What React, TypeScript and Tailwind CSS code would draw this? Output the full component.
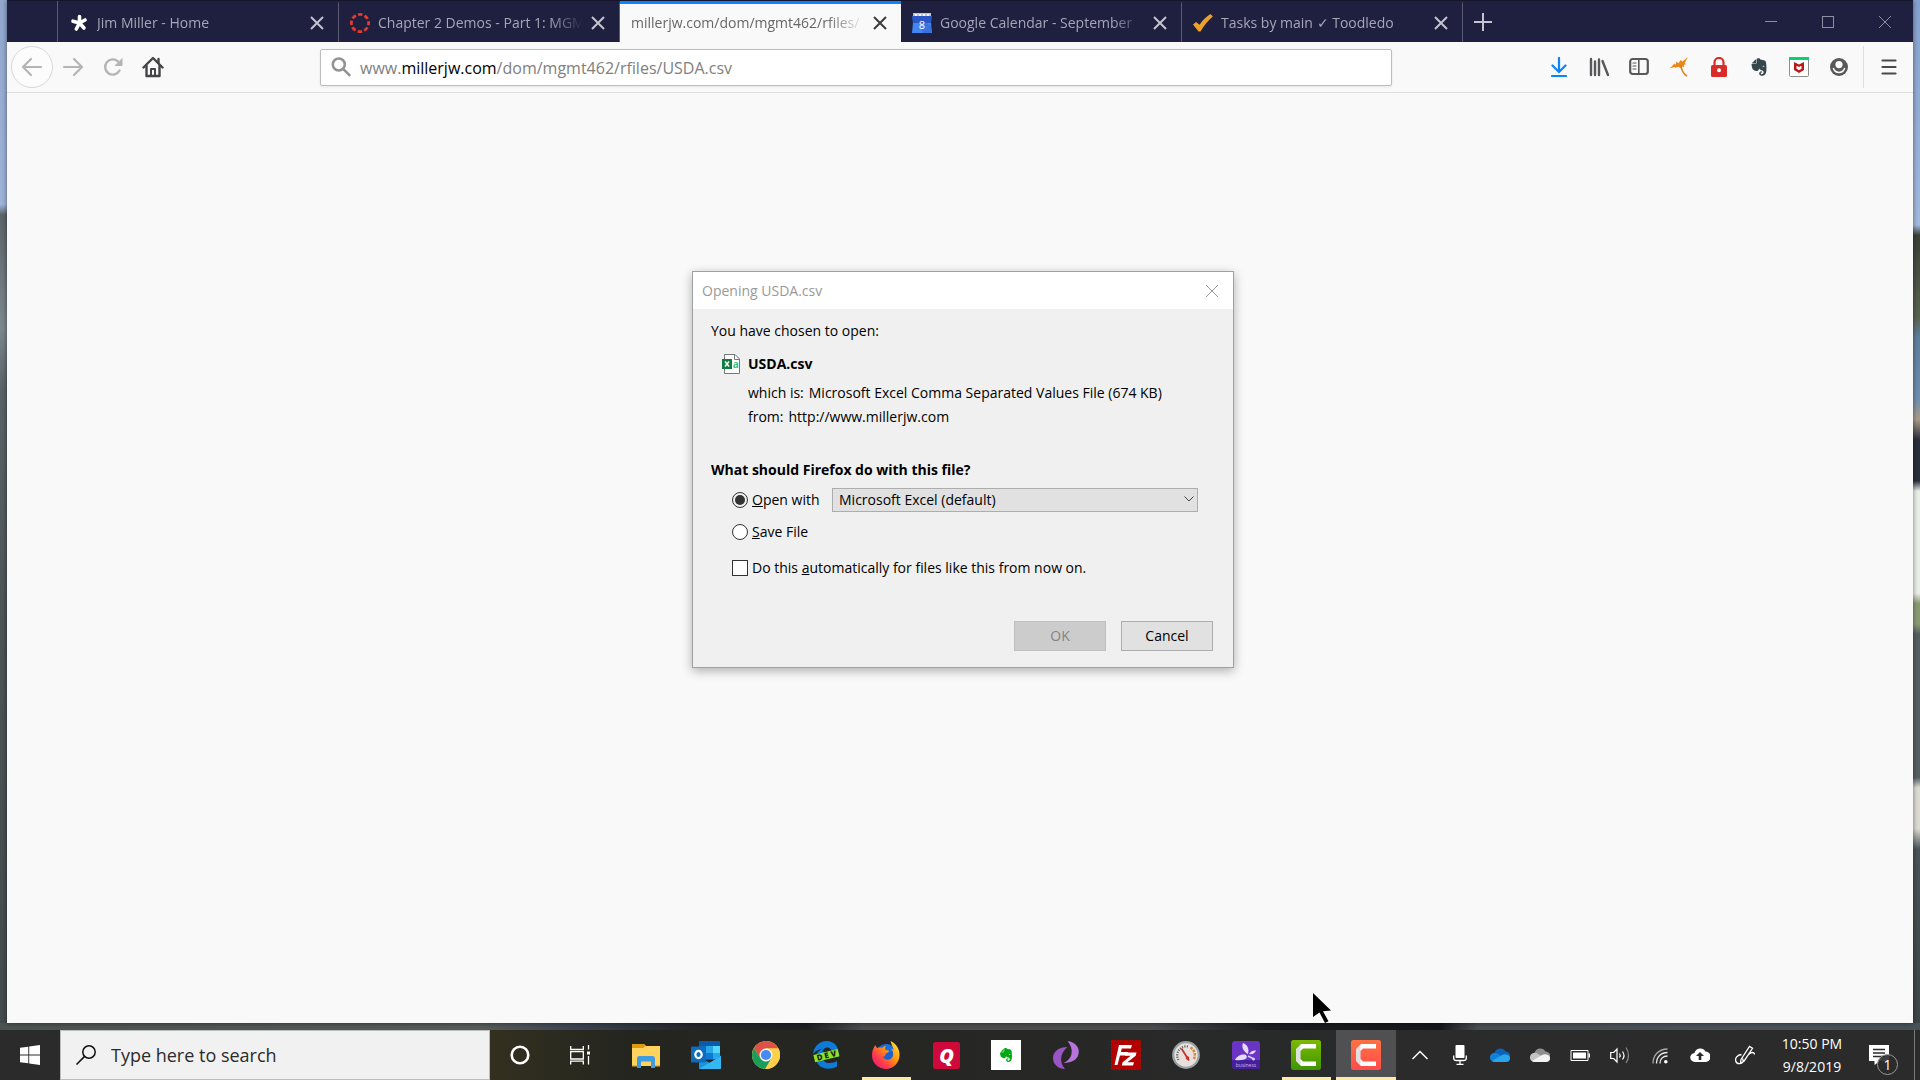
import type { ReactNode } from "react"
import { FaEvernote } from "react-icons/fa"

type TabProps = {
  title: string
  icon?: ReactNode
  active?: boolean
}

type TaskProps = {
  name: string
  icon: ReactNode
  state?: "running" | "focused"
}

/* ---------- tab icons ---------- */

const Asterisk = () => (
  <svg viewBox="0 0 20 20" className="size-5" stroke="#fff" strokeWidth="3.600" strokeLinecap="round">
    <path d="M10.500 10V3.500M10.500 10l5.500-3M10.500 10l4.500 5M10.500 10l-3.200 6M10.500 10L4 8.200" />
  </svg>
)

const CanvasRing = () => (
  <svg viewBox="0 0 20 20" className="size-5" fill="none">
    <circle cx="10" cy="10" r="8.600" stroke="#e63b2e" strokeWidth="2.800" strokeDasharray="4.400 2.354" strokeDashoffset="2.200" />
  </svg>
)

const CalendarIcon = () => (
  <svg viewBox="0 0 20 20" className="size-5">
    <path d="M1 0h18v5H1z" fill="#c4c4c4" />
    <path d="M3 1h2v2H3zM7 1h2v2H7zM11 1h2v2h-2zM15 1h2v2h-2z" fill="#f7f7f7" />
    <path d="M0 3h20l-1 8H1z" fill="#2a56c6" />
    <path d="M1 10h18l1 10H0z" fill="#4285f4" />
    <path d="M12 8l7 5v7h-9z" fill="#3367d6" opacity=".6" />
    <text x="10" y="15.500" textAnchor="middle" fontSize="11" fontFamily="Open Sans, sans-serif" fill="#fff">8</text>
  </svg>
)

const OrangeCheck = () => (
  <svg viewBox="0 0 20 20" className="size-5">
    <path d="M0 11.500l3-2.400 3.600 2.600C9.500 7.500 13 3.500 17.500 1l2.300 2.500C15 7.500 11 12.500 7.500 18.500H5.500z" fill="#eda02c" />
  </svg>
)

const Cross = ({ className }: { className: string }) => (
  <svg viewBox="0 0 14 14" className={className} fill="none" stroke="currentColor">
    <path d="M1 1l12 12M13 1L1 13" />
  </svg>
)

/* ---------- toolbar icons ---------- */

const BackIcon = () => (
  <svg viewBox="0 0 22 22" className="size-[22px]" fill="none" stroke="#b4b4b4" strokeWidth="2.200" strokeLinecap="round" strokeLinejoin="round">
    <path d="M20 11H2M10 3l-8 8 8 8" />
  </svg>
)

const ForwardIcon = () => (
  <svg viewBox="0 0 22 22" className="size-[22px]" fill="none" stroke="#b4b4b4" strokeWidth="2.200" strokeLinecap="round" strokeLinejoin="round">
    <path d="M2 11h18M12 3l8 8-8 8" />
  </svg>
)

const ReloadIcon = () => (
  <svg viewBox="0 0 22 22" className="size-[22px]" fill="none" stroke="#b4b4b4" strokeWidth="2.400" strokeLinecap="round">
    <path d="M17.500 14.500A7.600 7.600 0 1 1 16 5.500" />
    <path d="M20 3v6.500h-6.500z" fill="#b4b4b4" stroke="#b4b4b4" strokeWidth="1" strokeLinejoin="round" />
  </svg>
)

const HomeIcon = () => (
  <svg viewBox="0 0 22 22" className="size-[22px]" fill="none" stroke="#454547" strokeWidth="2.400" strokeLinejoin="round" strokeLinecap="round">
    <path d="M1.500 11.500L11 2l9.500 9.500" />
    <path d="M4.500 10v10h13V10" />
    <path d="M9 19v-6h4v6" strokeWidth="2" />
    <path d="M16.500 3v4" />
  </svg>
)

const SearchGlass = () => (
  <svg viewBox="0 0 20 20" className="size-5" fill="none" stroke="#939393" strokeWidth="2.600" strokeLinecap="round">
    <circle cx="7.800" cy="7.500" r="6" />
    <path d="M12.400 12.200l6 6" />
  </svg>
)

const DownloadIcon = () => (
  <svg viewBox="0 0 20 20" className="size-5" fill="none" stroke="#0a84ff" strokeWidth="2.200" strokeLinecap="round" strokeLinejoin="round">
    <path d="M10 1v13M3.500 8.500L10 15l6.500-6.500M3 19h14" />
  </svg>
)

const LibraryIcon = () => (
  <svg viewBox="0 0 20 20" className="size-5" fill="none" stroke="#58585a" strokeWidth="2.400" strokeLinecap="round">
    <path d="M2 2v16M6 4.500V18M10 2.500V18M13.500 4L19 18" />
  </svg>
)

const SidebarIcon = () => (
  <svg viewBox="0 0 20 20" className="size-5" fill="none" stroke="#58585a" strokeWidth="2.200" strokeLinecap="round">
    <rect x="1.200" y="2" width="17.600" height="15" rx="2.500" />
    <path d="M9.800 2v15" strokeWidth="1.600" />
    <path d="M4 6h3M4 9h3M4 12h3" strokeWidth="1.200" />
  </svg>
)

const ParasolIcon = () => (
  <svg viewBox="0 0 20 20" className="size-5">
    <path d="M.5 11.500c2-2 4-3 4.500-5l1.500 1.200 1-3.200 2 1.800L11.500 3l2 1.500L19 0l-3 5.500.5 2-1.500.2v2.500l-2-1-1.500 2-2-1.500-3 1-1-.8z" fill="#e98a15" />
    <path d="M12 8.500c.5 4 2.500 8.500 6 10.500" stroke="#dd7d10" strokeWidth="1.600" fill="none" />
  </svg>
)

const LockIcon = () => (
  <svg viewBox="0 0 20 20" className="size-5">
    <path d="M5.500 9V5.500a4.500 4.500 0 0 1 9 0V9" fill="none" stroke="#d92b27" strokeWidth="2.200" />
    <rect x="2" y="8" width="16" height="12" rx="1.500" fill="#d92b27" />
    <circle cx="10" cy="13.300" r="2" fill="#fff" />
  </svg>
)

const ShieldIcon = () => (
  <svg viewBox="0 0 20 20" className="size-5">
    <rect x=".5" y=".5" width="19" height="19" rx="1" fill="#fff" stroke="#8c8c8c" />
    <path d="M0 0h20v3H0z" fill="#08d26b" />
    <path d="M5 5l5 2.500L15 5v8l-5 3-5-3zM7.500 8.800v3l2.500 1.500 2.500-1.500v-3L10 10z" fill="#b91818" fillRule="evenodd" />
  </svg>
)

const AccountIcon = () => (
  <svg viewBox="0 0 20 20" className="size-5">
    <circle cx="10" cy="10" r="9" fill="#58585a" />
    <circle cx="10" cy="7.600" r="3.600" fill="#f9f9fa" />
    <path d="M4.300 11a5.900 5.900 0 0 0 11.400 0" fill="none" stroke="#f9f9fa" strokeWidth="1.500" />
  </svg>
)

const MenuIcon = () => (
  <svg viewBox="0 0 20 20" className="size-5" stroke="#4a4a4c" strokeWidth="2.200" strokeLinecap="round">
    <path d="M3.500 3.500h13M3.500 10h13M3.500 16.500h13" />
  </svg>
)

const ExcelFileIcon = () => (
  <svg viewBox="0 0 18 20" className="h-5 w-[18px] shrink-0">
    <path d="M2.500.5H13l4.500 4.500v14.500h-15z" fill="#fff" stroke="#777" />
    <path d="M12.500.5V5.500h5" fill="none" stroke="#777" />
    <path d="M0 5h10v10H0z" fill="#107c41" />
    <path d="M3 7.500l4 5M7 7.500l-4 5" stroke="#fff" strokeWidth="1.500" />
    <text x="13.800" y="13.700" textAnchor="middle" fontSize="10" fontWeight="700" fontFamily="Open Sans, sans-serif" fill="#33c481">a</text>
  </svg>
)

/* ---------- taskbar icons ---------- */

const WindowsLogo = () => (
  <svg viewBox="0 0 20 20" className="size-5" fill="#fff">
    <path d="M0 2.800L8.300 1.700V9.500H0zM9.200 1.500L20 0v9.500H9.200zM0 10.400h8.300v7.900L0 17.200zM9.200 10.400H20V20L9.200 18.500z" />
  </svg>
)

const TaskSearch = () => (
  <svg viewBox="0 0 20 20" className="size-5 shrink-0" fill="none" stroke="#111" strokeWidth="1.500">
    <circle cx="13" cy="7" r="6.200" />
    <path d="M8.600 11.400L.5 19.500" />
  </svg>
)

const Cortana = () => (
  <svg viewBox="0 0 20 20" className="size-5" fill="none">
    <circle cx="10" cy="10" r="8.300" stroke="#fff" strokeWidth="2.600" />
  </svg>
)

const TaskView = () => (
  <svg viewBox="0 0 20 20" className="size-5" fill="none" stroke="#fff" strokeWidth="1.300">
    <path d="M.7 1v3.300h12.600V1M.7 19.500v-3.300h12.600v3.300M.7 6.500h12.600v7.500H.7zM18.500 0v4.500M18.500 11v8.500" />
    <path d="M17 6.500h3v3h-3z" fill="#fff" stroke="none" />
  </svg>
)

const Explorer = () => (
  <svg viewBox="0 0 28 28" className="size-7">
    <path d="M0 3h12l2 2h14v20H0z" fill="#ffd35c" />
    <path d="M0 3h12l1.500 2L11 7H0z" fill="#e09a10" />
    <path d="M5 27V17.500Q5 15 7.500 15h13q2.500 0 2.500 2.500V27h-4v-6.500H9V27z" fill="#3e9cdf" />
    <path d="M0 24h5v1.500H0zM23 24h5v1.500h-5z" fill="#e6b23c" />
  </svg>
)

const Outlook = () => (
  <svg viewBox="0 0 30 28" className="h-7 w-[30px]">
    <rect x="8" y="0" width="21" height="19" rx="1" fill="#0a5cab" />
    <path d="M8 5h7v7H8z" fill="#1070bd" />
    <path d="M15 5h7v7h-7z" fill="#28a8ea" />
    <path d="M22 5h7v7h-7z" fill="#50d9ff" />
    <path d="M15 12h7v6h-7z" fill="#0f78d4" />
    <path d="M22 12h7v6h-7z" fill="#28a8ea" />
    <path d="M8 16l11 6 11-7.500V27q0 1-1 1H9q-1 0-1-1z" fill="#1a94e0" />
    <path d="M8 28l22-13v12q0 1-1 1z" fill="#35b8f1" />
    <rect x="0" y="5.500" width="15" height="16" rx="1.200" fill="#0f6cbd" />
    <ellipse cx="7.500" cy="13.500" rx="3.200" ry="3.700" fill="none" stroke="#fff" strokeWidth="2.200" />
  </svg>
)

const Chrome = () => (
  <svg viewBox="0 0 28 28" className="size-7">
    <circle cx="14" cy="14" r="14" fill="#fdd04c" />
    <path d="M14 7.500h12.400A14 14 0 0 0 1.900 7L8 17z" fill="#de5246" />
    <path d="M1.900 7A14 14 0 0 0 13.200 28L19.500 17.300 14 20 8.300 17.200z" fill="#1a9c5a" />
    <path d="M19.700 17.200L13.200 28A14 14 0 0 0 26.400 7.500H14z" fill="#fdd04c" />
    <circle cx="14" cy="14" r="6.500" fill="#f4f4f4" />
    <circle cx="14" cy="14" r="5.100" fill="#4889f4" />
  </svg>
)

const EdgeDev = () => (
  <svg viewBox="0 0 28 28" className="size-7">
    <path d="M1 13C2 4 9 0 14.500 0 22 0 26.500 5.500 26.500 12v4H10c.3 4 4 6 7.500 6 3 0 5.500-.8 7.500-2v5.500c-2.500 1.500-5.500 2.200-9 2.200C9 27.700 4 23 4 17c0-4.500 2.500-7.500 6-9-4 .5-7 2.500-9 5zM10.500 11h9c0-3-1.800-4.600-4.300-4.600-2.600 0-4.300 1.800-4.700 4.600z" fill="#0f7bd8" />
    <g transform="rotate(-14 14 15)">
      <path d="M2 11h25v7.500H2z" fill="#8ee32b" />
      <text x="14.500" y="17.500" textAnchor="middle" fontSize="8" fontWeight="800" fontFamily="Open Sans, sans-serif" fill="#1c2a08">D E V</text>
    </g>
  </svg>
)

const Firefox = () => (
  <svg viewBox="0 0 28 28" className="size-7">
    <defs>
      <linearGradient id="fx" x1="1" y1="0" x2="0" y2="1">
        <stop offset="0" stopColor="#fff04a" />
        <stop offset=".4" stopColor="#ff980e" />
        <stop offset=".7" stopColor="#ff3750" />
        <stop offset="1" stopColor="#e31587" />
      </linearGradient>
    </defs>
    <circle cx="14" cy="13.500" r="10.500" fill="#1f5fd0" />
    <path d="M14 3c3 0 6 1 8 4l-3 4-8 1-3-5z" fill="#1a6fe0" />
    <path d="M3.500 4c.3 1.500 1 2.500 2 3 1.500-.6 3-.6 4.500-.2L14 4.500C13 6.500 12.500 8 14 9c1.500.5 3 .3 3 1-.3 1.500-2 1.800-3.500 3 .2 2-1 2.500-2.500 2.800 1.500 3.200 5 3.700 7.500 2.200 3.500-2 3.500-7 .5-10.500 1.200.3 2 1 2.600 1.700C21.500 6 19.500 4 18.500 0c5 2 9.500 8 9 14.500C27 22.500 21 28 14 28S0 22.500 0 14.500C0 10.500 1.200 6.500 3.500 4z" fill="url(#fx)" />
  </svg>
)

const Quicken = () => (
  <svg viewBox="0 0 27 27" className="size-[27px]">
    <rect width="27" height="27" rx="2.500" fill="#cf0a3a" />
    <text x="13.500" y="20.500" textAnchor="middle" fontSize="20" fontWeight="800" fontStyle="italic" fontFamily="Open Sans, sans-serif" fill="#fff">Q</text>
  </svg>
)

const EvernoteTile = () => (
  <span className="flex size-[30px] items-center justify-center bg-white">
    <FaEvernote className="size-4 text-[#00a812]" />
  </span>
)

const PurpleSwirl = () => (
  <svg viewBox="0 0 28 28" className="size-7">
    <path d="M15.500 0C23 1 28 6.500 26.500 13 25.500 18.500 20 22 11.500 22c4-2 7-4.500 8-9C20.300 9 19 4 15.500 0z" fill="#b873dc" />
    <path d="M15.500 6C7 6 1 10.500 1 17c0 6 4.500 10.500 12 11-3-3.500-4.200-7-3.800-11 .4-4 2.500-8 6.300-11z" fill="#9a55c4" />
  </svg>
)

const FileZilla = () => (
  <svg viewBox="0 0 30 30" className="size-[30px]">
    <rect x=".5" y=".5" width="29" height="29" fill="#b40000" stroke="#d40000" strokeDasharray="1.500 1.500" />
    <path d="M8 5h13l-1 3.600h-9.200L9.900 12h7.300l-1 3.600H9L6.500 25H3.500z" fill="#fff" />
    <path d="M15 12.500h10.500l-.8 3.200-8.300 6.500h6.500l-.8 3.300H10.800l.8-3.200 8.100-6.500h-5.500z" fill="#fff" />
  </svg>
)

const Gauge = () => (
  <svg viewBox="0 0 28 28" className="size-7" fill="none">
    <circle cx="14" cy="14" r="12.800" fill="#e6e2db" stroke="#98a2a8" strokeWidth="2.200" />
    <path d="M6.500 19A9 9 0 0 1 17 5.800" stroke="#6a6a6a" strokeWidth="2.200" strokeDasharray="1.200 1.200" />
    <path d="M18.500 6.500A9 9 0 0 1 22 18" stroke="#d58745" strokeWidth="2.600" strokeDasharray="2.500 1" />
    <path d="M9.500 7.500l7.500 12" stroke="#c9302c" strokeWidth="1.800" />
    <circle cx="15.500" cy="17" r="1.800" fill="#c9302c" />
  </svg>
)

const Splashtop = () => (
  <svg viewBox="0 0 28 28" className="size-7">
    <rect width="28" height="28" rx="3" fill="#6a35c4" />
    <path d="M0 19h28v6q0 3-3 3H3q-3 0-3-3z" fill="#45209a" />
    <path d="M11 2c4.500 1.500 6.500 6 5 11-4-2-7-6.500-5-11zM17 13c2-3 4.500-4 7-3.500-1 3-4 4.500-7 3.500zM14 14c2.500 3.500-1 6-11 5 2-3.500 6-6.500 11-5z" fill="#e4daf9" />
    <circle cx="21.500" cy="18" r="1.500" fill="#d9cbf7" />
    <path d="M16 15l5 2.500" stroke="#d9cbf7" strokeWidth="1.400" />
    <text x="14" y="26" textAnchor="middle" fontSize="5" fontFamily="Open Sans, sans-serif" fill="#cdbdf0">business</text>
  </svg>
)

const CamtasiaC = ({ from, to, id }: { from: string; to: string; id: string }) => (
  <svg viewBox="0 0 30 30" className="size-[30px]">
    <defs>
      <linearGradient id={id} x1="0" y1="0" x2="0" y2="1">
        <stop offset="0" stopColor={from} />
        <stop offset="1" stopColor={to} />
      </linearGradient>
    </defs>
    <rect width="30" height="30" rx="2.500" fill={`url(#${id})`} />
    <path d="M10 4h15v4.500H12L9.500 11v8l2.500 2.500h13V26H10l-5-5V9z" fill="#fff" />
    <path d="M5 9l4.500-4.500v21L5 21z" fill="#000" opacity=".12" />
  </svg>
)

/* ---------- tray icons ---------- */

const cloud = "M5 17a4.500 4.500 0 0 1-.5-9A6 6 0 0 1 15.500 6.500 5.300 5.300 0 0 1 16 17z"

const MicIcon = () => (
  <svg viewBox="0 0 20 20" className="size-5" fill="none" stroke="#fff" strokeWidth="1.300">
    <rect x="5.500" y="0" width="9" height="13" rx="1" fill="#fff" stroke="none" />
    <path d="M3.700 10.500v2.500q0 2.500 2.500 2.500h7.600q2.500 0 2.500-2.500v-2.500M10 15.500v3.500M6.500 19.300h7" />
  </svg>
)

const OneDrive = () => (
  <svg viewBox="0 0 20 20" className="size-5">
    <path d={cloud} fill="#0b62b8" />
    <path d="M0 13a4.800 4.800 0 0 1 5-5.300c3 .3 5 2.800 8 4.300l5 4c-1 .7-2 1-3 1H5a4.500 4.500 0 0 1-5-4z" fill="#1180d8" />
    <path d="M2 16l10-6c3-1.500 7-.5 8 2.500.5 2.500-1.500 4.500-4 4.500H5q-1.800 0-3-1z" fill="#2ba5ea" />
  </svg>
)

const OneDriveGray = () => (
  <svg viewBox="0 0 20 20" className="size-5">
    <path d={cloud} fill="#8e8e8e" />
    <path d="M0 13a4.800 4.800 0 0 1 5-5.300c3 .3 5 2.800 8 4.300l5 4c-1 .7-2 1-3 1H5a4.500 4.500 0 0 1-5-4z" fill="#c4c4c4" />
    <path d="M2 16l10-6c3-1.500 7-.5 8 2.500.5 2.500-1.500 4.500-4 4.500H5q-1.800 0-3-1z" fill="#f2f2f2" />
  </svg>
)

const Battery = () => (
  <svg viewBox="0 0 20 20" className="size-5" fill="none">
    <path d="M1 5.500h17v10H1z" stroke="#fff" />
    <path d="M3 7.500h13v6H3zM18.500 8.500H20v4h-1.500z" fill="#fff" />
  </svg>
)

const Volume = () => (
  <svg viewBox="0 0 20 20" className="size-5" fill="none" stroke="#fff" strokeWidth="1.200">
    <path d="M.7 7.500h3L7 4v13l-3.300-3.500h-3z" />
    <path d="M9.500 8.500q1.500 2 0 4M12.500 6.500q3 4 0 8" />
    <path d="M16 2.500q5 8 0 15.500" stroke="#888" />
  </svg>
)

const Wifi = () => (
  <svg viewBox="0 0 20 20" className="size-5" fill="none" stroke="#e8e8e8" strokeWidth="1.300">
    <path d="M3 18.500C3 10 9 4 17.500 4" stroke="#aaa" />
    <path d="M6.500 18.500C6.500 12 11 7.500 17.500 7.500M10 18.500c0-4.500 3-7.500 7.500-7.500" />
    <circle cx="15.800" cy="16.800" r="1.800" fill="#fff" stroke="none" />
  </svg>
)

const CloudUp = () => (
  <svg viewBox="0 0 20 20" className="size-5">
    <path d={cloud} fill="#fff" />
    <path d="M10 7l4 4h-2.700v4H8.700v-4H6z" fill="#2b2b2b" />
  </svg>
)

const PenIcon = () => (
  <svg viewBox="0 0 20 20" className="size-5" fill="none" stroke="#fff" strokeWidth="1.300">
    <path d="M6 14.500L14.500 1.500l3 1.800L9 16.200l-3.500 2zM6.500 9.500C2 10 0 13 .7 16c.8 3.500 6 3.500 7.500.5l-.5-3M13 10c3-3.500 6.500-3 6.500-.5" />
  </svg>
)

const Notification = () => (
  <svg viewBox="0 0 20 20" className="size-5">
    <path d="M0 0h20v16h-9l-5.500 4v-4H0z" fill="#fff" />
    <path d="M4 4.500h12M4 8h12M4 11.500h12" stroke="#2b2b2b" strokeWidth="1.300" />
  </svg>
)

/* ---------- pieces ---------- */

const Tab = ({ title, icon, active }: TabProps) => (
  <div
    className={`flex w-[281px] min-w-0 items-center border-t-[3px] pb-px pl-[11px] pr-[14px] ${
      active
        ? "border-t-[#0a84ff] bg-[#f9f9fa] text-[#666]"
        : "border-r border-r-[#5b5c73] border-t-[#1f2040] text-[#a5a6b6]"
    }`}
  >
    {icon && <span className="mr-2 shrink-0">{icon}</span>}
    <span className="min-w-0 flex-1 overflow-hidden whitespace-nowrap text-[14px] leading-5 [mask-image:linear-gradient(to_right,black_84%,transparent)]">
      {title}
    </span>
    <button aria-label={`Close ${title}`} className={`ml-2 shrink-0 ${active ? "text-[#3c3c3c]" : "text-[#c3c4cf]"}`}>
      <Cross className="size-[14px] stroke-2" />
    </button>
  </div>
)

const tools = [
  { name: "Downloads", icon: <DownloadIcon /> },
  { name: "Library", icon: <LibraryIcon /> },
  { name: "Sidebars", icon: <SidebarIcon /> },
  { name: "Parasol", icon: <ParasolIcon /> },
  { name: "Password manager", icon: <LockIcon /> },
  { name: "Web clipper", icon: <FaEvernote className="size-5 text-[#36474b]" /> },
  { name: "Web advisor", icon: <ShieldIcon /> },
  { name: "Account", icon: <AccountIcon /> },
]

const shellTasks: TaskProps[] = [
  { name: "Cortana", icon: <Cortana /> },
  { name: "Task View", icon: <TaskView /> },
]

const tasks: TaskProps[] = [
  { name: "File Explorer", icon: <Explorer /> },
  { name: "Outlook", icon: <Outlook /> },
  { name: "Chrome", icon: <Chrome /> },
  { name: "Edge Dev", icon: <EdgeDev /> },
  { name: "Firefox", icon: <Firefox />, state: "running" },
  { name: "Quicken", icon: <Quicken /> },
  { name: "Evernote", icon: <EvernoteTile /> },
  { name: "Swirl", icon: <PurpleSwirl /> },
  { name: "FileZilla", icon: <FileZilla /> },
  { name: "Gauge", icon: <Gauge /> },
  { name: "Splashtop", icon: <Splashtop /> },
  { name: "Camtasia", icon: <CamtasiaC from="#7cba00" to="#3f9500" id="green" />, state: "running" },
  { name: "Camtasia Recorder", icon: <CamtasiaC from="#ff7043" to="#ff4d4a" id="red" />, state: "focused" },
]

const tray = [
  { name: "Microphone", icon: <MicIcon /> },
  { name: "OneDrive", icon: <OneDrive /> },
  { name: "OneDrive personal", icon: <OneDriveGray /> },
  { name: "Battery", icon: <Battery /> },
  { name: "Volume", icon: <Volume /> },
  { name: "Network", icon: <Wifi /> },
  { name: "Backup", icon: <CloudUp /> },
]

const TaskButton = ({ name, icon, state }: TaskProps) => (
  <button
    aria-label={name}
    className={`flex w-[60px] shrink-0 flex-col items-center ${state === "focused" ? "bg-[#505052]" : ""}`}
  >
    <span className="flex flex-1 items-center pt-[3px]">{icon}</span>
    <span
      className={`h-[3px] ${
        state === "focused" ? "w-full bg-[#ffe9a8]" : state === "running" ? "w-[49px] bg-[#ffe9a8]" : "w-full"
      }`}
    />
  </button>
)

const OpenDialog = () => (
  <section
    role="dialog"
    aria-label="Opening USDA.csv"
    className="w-[542px] border border-[#a0a0a0] bg-[#f0f0f0] text-[14px] leading-5 text-black shadow-[0_3px_10px_rgba(0,0,0,0.3)]"
  >
    <header className="flex h-[37px] items-center justify-between bg-white pl-[9px] pr-[14px] text-[#999]">
      <h1>Opening USDA.csv</h1>
      <button aria-label="Close dialog">
        <Cross className="size-[14px]" />
      </button>
    </header>

    <div className="px-[18px] pb-4 pt-3">
      <p>You have chosen to open:</p>
      <div className="flex items-center gap-2 pl-[11px] pt-[13px] font-bold">
        <ExcelFileIcon />
        USDA.csv
      </div>
      <dl className="grid gap-1 pl-[37px] pt-[9px]">
        <div className="flex gap-[5px]">
          <dt>which is:</dt>
          <dd>Microsoft Excel Comma Separated Values File (674 KB)</dd>
        </div>
        <div className="flex gap-[5px]">
          <dt>from:</dt>
          <dd>http://www.millerjw.com</dd>
        </div>
      </dl>

      <h2 className="pt-[33px] font-bold">What should Firefox do with this file?</h2>
      <div className="flex items-center pl-[21px] pr-[17px] pt-2">
        <label className="flex w-[100px] items-center gap-1">
          <input
            type="radio"
            name="action"
            defaultChecked
            className="size-4 appearance-none rounded-full border border-[#333] bg-white bg-clip-content p-[2px] checked:bg-[#333]"
          />
          <span>
            <u>O</u>pen with
          </span>
        </label>
        <div className="relative flex-1">
          <select
            aria-label="Application"
            className="block h-6 w-full appearance-none border border-[#adadad] bg-[#e1e1e1] pl-[6px] text-[14px] leading-5"
          >
            <option>Microsoft Excel (default)</option>
          </select>
          <svg
            viewBox="0 0 10 6"
            className="pointer-events-none absolute right-1 top-2 h-[6px] w-[10px]"
            fill="none"
            stroke="#444"
          >
            <path d="M.5.5L5 5 9.500.5" />
          </svg>
        </div>
      </div>
      <label className="flex items-center gap-1 pl-[21px] pt-[10px]">
        <input
          type="radio"
          name="action"
          className="size-4 appearance-none rounded-full border border-[#333] bg-white p-[2px] checked:bg-[#333] checked:bg-clip-content"
        />
        <span>
          <u>S</u>ave File
        </span>
      </label>
      <label className="flex items-center gap-1 pl-[21px] pt-4">
        <input type="checkbox" className="size-4 appearance-none border border-[#333] bg-white checked:bg-[#333]" />
        <span>
          Do this <u>a</u>utomatically for files like this from now on.
        </span>
      </label>

      <div className="flex justify-end gap-[15px] pr-[2px] pt-[43px]">
        <button disabled className="h-[30px] w-[92px] border border-[#bfbfbf] bg-[#ccc] text-[#838383]">
          OK
        </button>
        <button className="h-[30px] w-[92px] border border-[#adadad] bg-[#e1e1e1]">Cancel</button>
      </div>
    </div>
  </section>
)

const Browser = () => (
  <div className="flex min-h-0 flex-1 flex-col bg-[#f9f9fa] shadow-[0_0_5px_rgba(0,0,0,0.5)]">
    <div className="flex h-[42px] border-t border-[#15162c] bg-[#1f2040]">
      <div className="w-[51px] border-r border-[#5b5c73]" />
      <Tab title="Jim Miller - Home" icon={<Asterisk />} />
      <Tab title="Chapter 2 Demos - Part 1: MGM" icon={<CanvasRing />} />
      <Tab title="millerjw.com/dom/mgmt462/rfiles/" active />
      <Tab title="Google Calendar - September" icon={<CalendarIcon />} />
      <Tab title="Tasks by main ✓ Toodledo" icon={<OrangeCheck />} />
      <button aria-label="New tab" className="px-[11px] text-[#c3c4cf]">
        <svg viewBox="0 0 18 18" className="size-[18px] stroke-2" stroke="currentColor">
          <path d="M9 0v18M0 9h18" />
        </svg>
      </button>
      <div className="ml-auto flex text-[#8d8ea0]">
        <button aria-label="Minimize" className="flex w-[57px] items-center justify-center">
          <span className="h-px w-3 bg-[#8d8ea0]" />
        </button>
        <button aria-label="Maximize" className="flex w-[57px] items-center justify-center">
          <span className="size-3 border border-[#8d8ea0]" />
        </button>
        <button aria-label="Close window" className="flex w-[57px] items-center justify-center">
          <Cross className="size-[14px]" />
        </button>
      </div>
    </div>

    <div className="flex h-[51px] items-center border-b border-[#dedede] pl-1">
      <button aria-label="Back" className="flex size-[42px] items-center justify-center rounded-full border border-[#d8d8d8] bg-[#fcfcfc]">
        <BackIcon />
      </button>
      <button aria-label="Forward" className="flex w-10 justify-center">
        <ForwardIcon />
      </button>
      <button aria-label="Reload" className="flex w-10 justify-center">
        <ReloadIcon />
      </button>
      <button aria-label="Home" className="flex w-10 justify-center">
        <HomeIcon />
      </button>
      <a
        href="#top"
        className="ml-[147px] mr-[147px] flex h-[37px] flex-1 items-center gap-[9px] rounded-xs border border-[#bcbcbc] bg-white pl-[10px] text-[16px] leading-6 text-[#808080] shadow-[0_1px_3px_rgba(0,0,0,0.08)]"
      >
        <SearchGlass />
        <span className="pt-[2px]">
          www.<span className="text-black">millerjw.com</span>/dom/mgmt462/rfiles/USDA.csv
        </span>
      </a>
      {tools.map((tool) => (
        <button key={tool.name} aria-label={tool.name} className="flex w-10 justify-center">
          {tool.icon}
        </button>
      ))}
      <button aria-label="Menu" className="ml-1 flex h-[42px] w-[50px] items-center justify-center border-l border-[#dedede]">
        <MenuIcon />
      </button>
    </div>

    <main className="flex flex-1 items-start justify-center pl-[6px] pt-[178px]">
      <OpenDialog />
    </main>
  </div>
)

const Taskbar = () => (
  <footer className="flex h-[50px] bg-[#2b2b2b] text-white">
    <button aria-label="Start" className="flex w-[60px] items-center justify-center">
      <WindowsLogo />
    </button>
    <label className="flex w-[430px] items-center gap-[15px] border border-[#bdbdbd] bg-[#f1f1f1] pl-[15px]">
      <TaskSearch />
      <input
        aria-label="Search"
        placeholder="Type here to search"
        className="w-full bg-transparent text-[18px] leading-6 outline-none placeholder:text-[#2b2b2b]"
      />
    </label>
    <div className="flex bg-linear-to-r from-[#33301f] via-[#24251f] via-15% to-[#292a2b]">
      {shellTasks.map((task) => (
        <TaskButton key={task.name} {...task} />
      ))}
      <div className="flex pl-[6px]">
        {tasks.map((task) => (
          <TaskButton key={task.name} {...task} />
        ))}
      </div>
    </div>
    <div className="ml-auto flex items-center">
      <button aria-label="Show hidden icons" className="flex w-10 justify-center">
        <svg viewBox="0 0 16 10" className="h-[10px] w-4" fill="none" stroke="#fff" strokeWidth="1.500">
          <path d="M.5 9L8 1.500 15.500 9" />
        </svg>
      </button>
      {tray.map((item) => (
        <button key={item.name} aria-label={item.name} className="flex w-10 justify-center">
          {item.icon}
        </button>
      ))}
      <button aria-label="Pen workspace" className="flex w-[50px] justify-center">
        <PenIcon />
      </button>
      <div className="w-[84px] text-center text-[14px] leading-[23px]">
        <p>10:50 PM</p>
        <p>9/8/2019</p>
      </div>
      <button aria-label="Notifications" className="relative flex w-[50px] justify-center">
        <Notification />
        <span className="absolute left-[23px] top-[9px] flex size-[21px] items-center justify-center rounded-full border border-[#999] bg-[#2b2b2b]/90 text-[14px] leading-5">
          1
        </span>
      </button>
      <span className="ml-[10px] mr-[5px] h-[50px] w-px bg-[#7a7a7a]" />
    </div>
  </footer>
)

/* thin slices of the desktop photo that show round the window */
const Wallpaper = () => (
  <div aria-hidden className="absolute inset-0 flex flex-col">
    <div className="flex flex-1 justify-between">
      <div className="w-[7px] bg-[linear-gradient(to_bottom,#93a8d0_0,#9fb3da_20%,#5c6468_21%,#7c8890_32%,#5a6468_38%,#4d5557_60%,#444b4c_100%)]" />
      <div className="w-[7px] bg-[linear-gradient(to_bottom,#86a3cf_0,#a3b9e0_22%,#3b4038_23%,#5a6350_31%,#5f7fa0_33%,#6f8fb0_39%,#a99c88_41%,#2a2f3c_43%,#2a2f3c_47%,#eceeea_48%,#eceeea_58%,#8a9b74_59%,#8a9b74_61%,#566063_62%,#566063_76%,#dcdcd4_77%,#dcdcd4_81%,#4a5557_83%,#3d4547_100%)]" />
    </div>
    <div className="h-[7px] bg-[linear-gradient(to_right,#4d5351_0,#565c5a_25%,#3c4454_30%,#25282c_36%,#1d2022_42%,#4c4d4e_45%,#4c4d4e_60%,#1b1d20_66%,#15171b_75%,#4a4f52_77%,#4c525c_90%,#47525a_100%)]" />
  </div>
)

export default function App() {
  return (
    <div className="flex h-screen flex-col overflow-hidden bg-[#4a5557] font-['Open_Sans','Noto_Sans',sans-serif]">
      <div className="relative flex min-h-0 flex-1 flex-col px-[7px] pb-[7px]">
        <Wallpaper />
        <div className="relative flex min-h-0 flex-1 flex-col">
          <Browser />
        </div>
        {/* mouse pointer */}
        <svg viewBox="0 0 18 30" className="absolute left-[1313px] top-[993px] h-[30px] w-[18px]">
          <path d="M0 0l18 17.500-8 .8 5.500 10-3.500 1.700-5.500-10.500L0 24z" fill="#000" />
        </svg>
      </div>
      <Taskbar />
    </div>
  )
}
